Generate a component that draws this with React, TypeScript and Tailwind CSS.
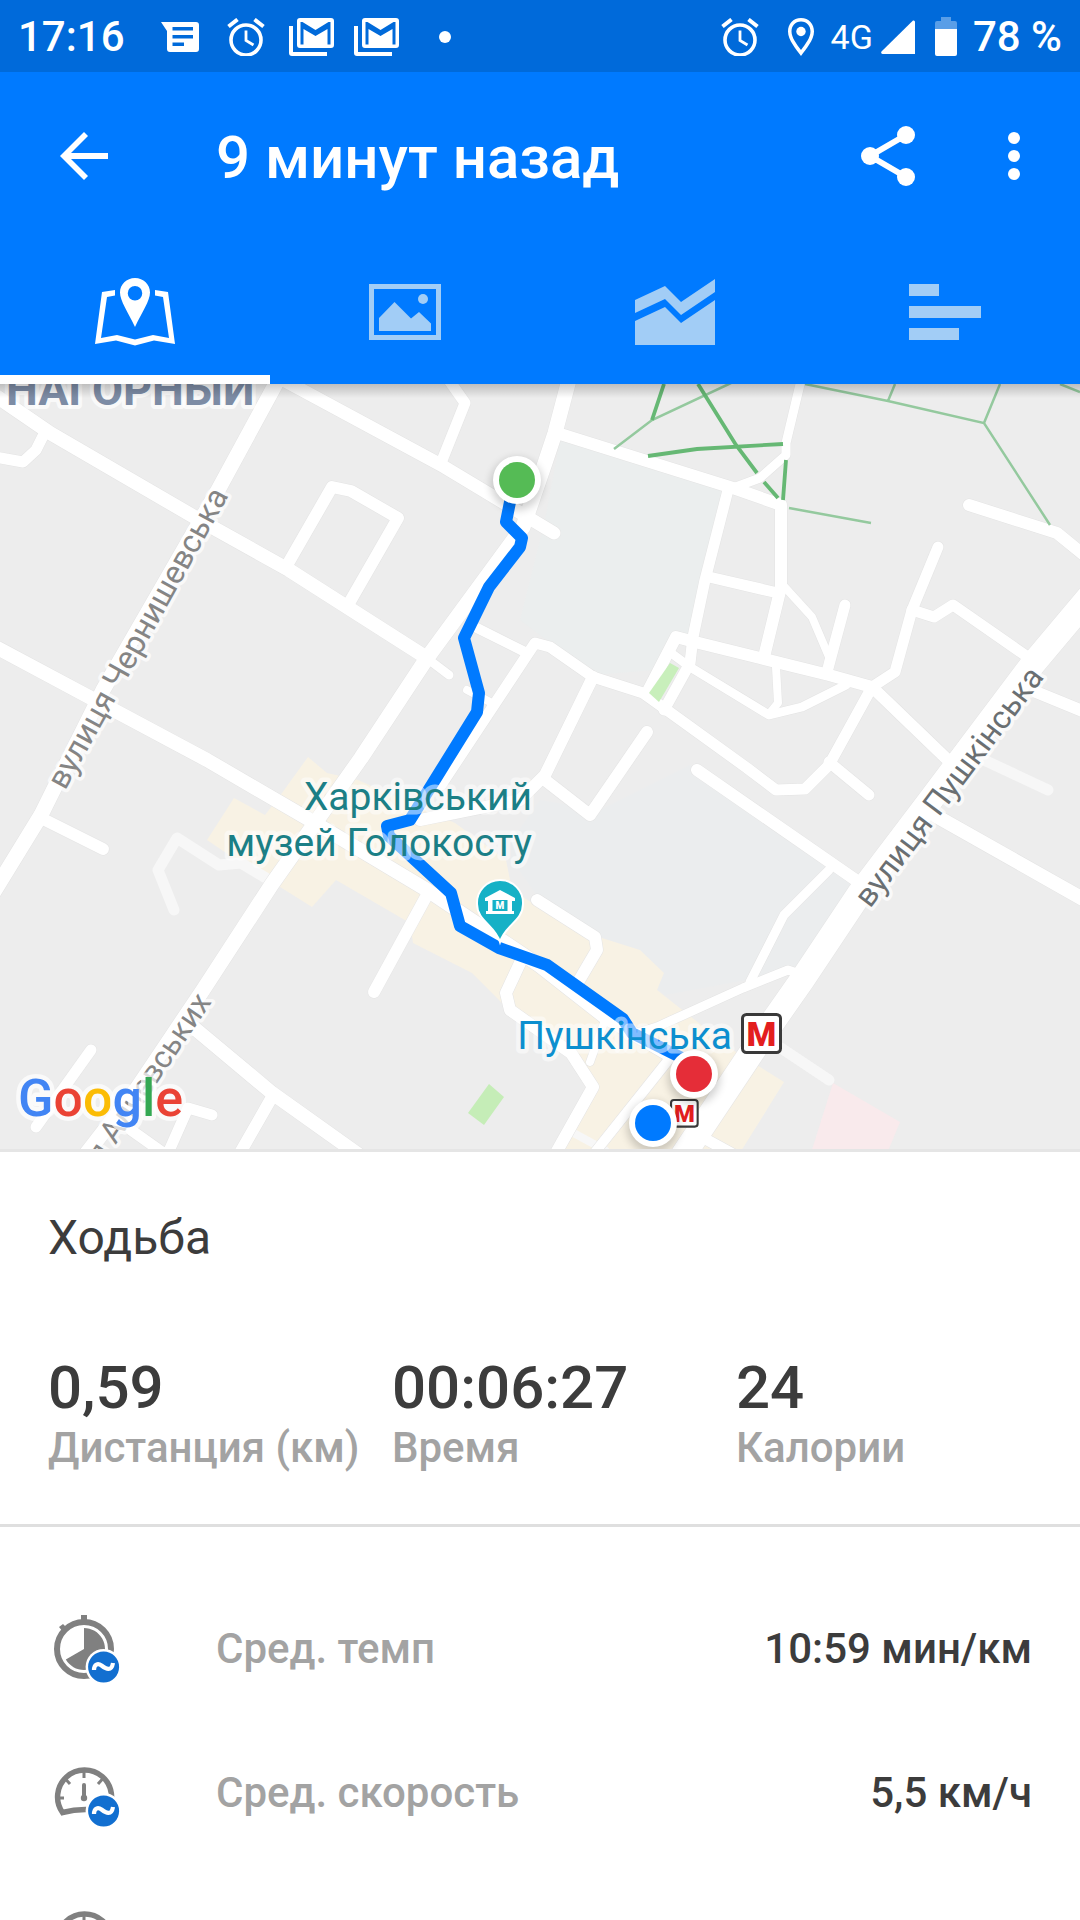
import type { ReactNode } from 'react'

type Road = { d: string; w: number }

const roads: Road[] = [
  { d: 'M-10 392L50 433L203 522L289 570L427 658', w: 14 },
  { d: 'M420 653L449 675', w: 9 },
  { d: 'M45 432L36 450L23 462L-5 457', w: 11 },
  { d: 'M280 376L217 492L103 690L41 815L-8 895', w: 15 },
  { d: 'M276 376L441 465L554 533', w: 13 },
  { d: 'M446 376L465 403L441 463', w: 11 },
  { d: 'M286 567L332 487L351 491L398 518L348 605', w: 12 },
  { d: 'M-10 644L91 698L207 760L310 820L427 890L540 966L605 1017L670 1055', w: 14 },
  { d: 'M570 376L555 433L545 463L523 527L427 658L361 758L272 884L203 990L138 1087L80 1162', w: 15 },
  { d: 'M477 628L527 653', w: 10 },
  { d: 'M467 690L492 703', w: 8 },
  { d: 'M441 785L535 643L550 647L593 677L643 693L664 708L747 768L776 790L805 789L829 765L872 687', w: 11 },
  { d: 'M593 677L545 775L520 800L420 820', w: 12 },
  { d: 'M545 780L590 815L647 732', w: 12 },
  { d: 'M829 762L869 795', w: 11 },
  { d: 'M872 687L951 763', w: 12 },
  { d: 'M872 687L895 672L912 610L938 547', w: 11 },
  { d: 'M912 610L934 617L953 605L1032 660', w: 11 },
  { d: 'M1090 596L1032 665L929 802L860 893L802 980L760 1040L680 1160', w: 25 },
  { d: 'M1036 692L1090 714', w: 12 },
  { d: 'M936 816L1090 903', w: 14 },
  { d: 'M697 770L860 883', w: 12 },
  { d: 'M829 870L784 915L750 982', w: 9 },
  { d: 'M806 976L788 970L743 988L657 1027L628 1036', w: 9 },
  { d: 'M537 900L595 937L597 950L577 984', w: 12 },
  { d: 'M557 433L733 488L781 505L781 587L764 657', w: 12 },
  { d: 'M733 488L760 478L786 455L786 443L802 376', w: 9 },
  { d: 'M728 490L705 580L693 637L690 663L664 710', w: 11 },
  { d: 'M709 577L778 593', w: 11 },
  { d: 'M647 693L676 637L695 642L760 658L829 675L872 687', w: 12 },
  { d: 'M671 653L690 667L769 715L802 707L846 685', w: 9 },
  { d: 'M776 667L778 703L769 714', w: 8 },
  { d: 'M781 583L812 617L829 657L828 672', w: 8 },
  { d: 'M845 605L827 672', w: 11 },
  { d: 'M969 505L1057 533L1090 560', w: 12 },
  { d: 'M41 818L103 849', w: 12 },
  { d: 'M427 895L374 992', w: 12 },
  { d: 'M520 963L506 993L510 1010L571 1053L593 1087L552 1160', w: 12 },
  { d: 'M605 1020L590 1062', w: 8 },
  { d: 'M193 1027L272 1093L366 1160', w: 14 },
  { d: 'M272 1097L236 1160', w: 12 },
  { d: 'M91 1050L36 1127', w: 11 },
  { d: 'M131 1130L176 1162M165 1160L188 1108L212 1115', w: 11 },
  { d: 'M670 1058L592 1156', w: 10 },
  { d: 'M700 1136L740 1158', w: 11 },
  { d: 'M508 1156L530 1164', w: 8 },
]

const minorRoads: Road[] = [
  { d: 'M174 910L158 870L177 838L219 865L241 863L266 878', w: 11 },
  { d: 'M984 760L1048 790', w: 11 },
  { d: 'M781 1048L829 1080', w: 11 },
  { d: 'M568 1130L605 1150', w: 8 },
]

const route =
  'M514 490L510 502L506 522L522 538L520 547L489 587L464 638L479 693L477 712L441 770L410 820L387 826L389 836L451 893L460 926L499 948L547 965L623 1019L632 1033L690 1062'

function Icon({ w, h, box, children }: { w: string; h: string; box: string; children: ReactNode }) {
  return (
    <svg className={`${w} ${h} shrink-0`} viewBox={box} fill="currentColor" aria-hidden="true">
      {children}
    </svg>
  )
}

function AlarmIcon() {
  return (
    <Icon w="w-[38px]" h="h-[38px]" box="0 0 38 38">
      <g fill="none" stroke="currentColor">
        <circle cx="19" cy="22" r="15" strokeWidth="3.6" />
        <path d="M19 12.5V22.5L26.5 27" strokeWidth="2.8" />
        <path d="M1.5 8.5L10.5 1.5M36.5 8.5L27.5 1.5" strokeWidth="4" />
      </g>
    </Icon>
  )
}

function GmailIcon() {
  return (
    <Icon w="w-[45px]" h="h-[38px]" box="0 0 45 38">
      <path d="M0 8H4V34H38V38H3Q0 38 0 35Z" />
      <path
        fillRule="evenodd"
        d="M11 0H42Q45 0 45 3V27Q45 30 42 30H11Q8 30 8 27V3Q8 0 11 0ZM11.5 4V26.5H14.5V11L26.5 18L38.5 11V26.5H41.5V4H39.5L26.5 12L13.5 4Z"
      />
    </Icon>
  )
}

function StatusBar() {
  return (
    <div className="flex h-[72px] items-center justify-between bg-[#006ada] px-[18px] pt-0.5 text-[42px] font-medium leading-none text-white">
      <div className="flex items-center">
        <span>17:16</span>
        <div className="ml-9 flex items-center gap-7">
          <Icon w="w-[38px]" h="h-[30px]" box="0 0 38 30">
            <path
              fillRule="evenodd"
              d="M0 0H35Q38 0 38 3V27Q38 30 35 30H9Q6 30 6 27V9ZM11.5 5V8.5H32V5ZM11.5 13V16.5H32V13ZM11.5 20.5V24H23V20.5Z"
            />
          </Icon>
          <AlarmIcon />
        </div>
        <div className="ml-6 flex items-center gap-5">
          <GmailIcon />
          <GmailIcon />
        </div>
        <span className="ml-10 size-3 rounded-full bg-white" />
      </div>
      <div className="flex items-center">
        <AlarmIcon />
        <div className="ml-7 mr-4 flex">
          <Icon w="w-[28px]" h="h-[38px]" box="0 0 28 38">
            <path
              fillRule="evenodd"
              d="M14 0C6 0 1 6 1 13.5C1 22 9 31 14 38C19 31 27 22 27 13.5C27 6 22 0 14 0ZM14 3.5C20 3.5 23.5 8 23.5 13.5C23.5 19.5 18.5 26 14 32C9.5 26 4.5 19.5 4.5 13.5C4.5 8 8 3.5 14 3.5Z"
            />
            <circle cx="14" cy="13.5" r="4.7" />
          </Icon>
        </div>
        <span className="text-[34px] font-normal">4G</span>
        <div className="ml-2 flex">
          <Icon w="w-[34px]" h="h-[34px]" box="0 0 34 34">
            <path d="M32 .5Q34 0 34 2V34H1.5Q-.5 33.5 .5 31.5Z" />
          </Icon>
        </div>
        <div className="ml-5 mr-4 flex">
          <Icon w="w-[22px]" h="h-[40px]" box="0 0 22 40">
            <path opacity=".35" d="M6 0H16V4H20Q22 4 22 6V12H0V6Q0 4 2 4H6Z" />
            <path d="M0 12H22V37Q22 39 20 39H2Q0 39 0 37Z" />
          </Icon>
        </div>
        <span>78 %</span>
      </div>
    </div>
  )
}

function Toolbar() {
  return (
    <div className="flex h-[168px] items-center pl-[60px] pr-[60px]">
      <button type="button" aria-label="Назад">
        <Icon w="w-12" h="h-12" box="0 0 48 48">
          <path d="M24 0L28 4L11 21H48V27H11L28 44L24 48L0 24Z" />
        </Icon>
      </button>
      <h1 className="ml-[108px] flex-1 pt-1 text-[60px] font-medium leading-none">9 минут назад</h1>
      <button type="button" aria-label="Поделиться">
        <Icon w="w-[54px]" h="h-[60px]" box="0 0 54 60">
          <path d="M45 9L9 30L45 51" fill="none" stroke="currentColor" strokeWidth="6" />
          <circle cx="45" cy="9" r="9" />
          <circle cx="9" cy="30" r="9" />
          <circle cx="45" cy="51" r="9" />
        </Icon>
      </button>
      <button type="button" aria-label="Ещё" className="ml-[93px]">
        <Icon w="w-3" h="h-12" box="0 0 12 48">
          <circle cx="6" cy="6" r="6" />
          <circle cx="6" cy="24" r="6" />
          <circle cx="6" cy="42" r="6" />
        </Icon>
      </button>
    </div>
  )
}

function Tabs() {
  return (
    <div role="tablist" className="grid h-36 grid-cols-4 text-[#a2cdf6]">
      <button
        type="button"
        role="tab"
        aria-selected="true"
        aria-label="Карта"
        className="flex items-center justify-center border-b-[9px] border-white pt-2 text-white"
      >
        <Icon w="w-20" h="h-[68px]" box="0 0 80 68">
          <path
            fillRule="evenodd"
            d="M40 0C31.5 0 25 6.5 25 14.5C25 23 33 34 40 49C47 34 55 23 55 14.5C55 6.5 48.5 0 40 0ZM40 8A7.2 7.2 0 1 1 40 22.5A7.2 7.2 0 1 1 40 8Z"
          />
          <path d="M20 12L7 14L0 66L21 62.5L40 67.5L59 62.5L80 66L73 14L60 12V17.5L68 19L74 60L58 57L40 61.5L22 57L6 60L12 19L20 17.5Z" />
        </Icon>
      </button>
      <button type="button" role="tab" aria-selected="false" aria-label="Фото" className="flex items-center justify-center">
        <Icon w="w-[72px]" h="h-14" box="0 0 72 56">
          <path fillRule="evenodd" d="M0 0H72V56H0ZM5 5V51H67V5Z" />
          <path d="M10 47V34L25.500 18L42 34.500L50 28L62 39.500V47Z" />
          <circle cx="54" cy="15" r="5" />
        </Icon>
      </button>
      <button type="button" role="tab" aria-selected="false" aria-label="Графики" className="flex items-center justify-center">
        <Icon w="w-20" h="h-[66px]" box="0 0 80 66">
          <path d="M0 21L30 7L46 23L80 0V13L46 36L30 20L0 34Z" />
          <path d="M0 42L30 28L46 44L80 21V66H0Z" />
        </Icon>
      </button>
      <button type="button" role="tab" aria-selected="false" aria-label="Отрезки" className="flex items-center justify-center">
        <Icon w="w-[72px]" h="h-14" box="0 0 72 56">
          <path d="M0 0H30V12H0ZM0 22H72V34H0ZM0 44H50V56H0Z" />
        </Icon>
      </button>
    </div>
  )
}

function Marker({ x, y, color }: { x: number; y: number; color: string }) {
  return (
    <g>
      <circle cx={x} cy={y + 4} r="26" fill="#000" opacity=".18" filter="url(#soft)" />
      <circle cx={x} cy={y} r="24" fill="#fff" />
      <circle cx={x} cy={y} r="18" fill={color} />
    </g>
  )
}

function MetroSign({ x, y, s }: { x: number; y: number; s: number }) {
  return (
    <g transform={`translate(${x} ${y}) scale(${s})`}>
      <rect x="1.5" y="1.5" width="38" height="38" rx="4" fill="#fff" stroke="#3a3a3a" strokeWidth="3" />
      <text x="20.5" y="33" textAnchor="middle" fontSize="34" fontWeight="900" fill="#e31e1e">
        М
      </text>
    </g>
  )
}

function RouteMap() {
  return (
    <svg
      className="block h-auto w-full shrink-0 bg-[#ededed]"
      viewBox="0 384 1080 768"
      fontFamily="Roboto, sans-serif"
      role="img"
      aria-label="Маршрут на карте"
    >
      <defs>
        <filter id="soft" x="-50%" y="-50%" width="200%" height="200%">
          <feGaussianBlur stdDeviation="4" />
        </filter>
        <linearGradient id="shade" x1="0" y1="0" x2="0" y2="1">
          <stop offset="0" stopColor="#000" stopOpacity=".2" />
          <stop offset="1" stopColor="#000" stopOpacity="0" />
        </linearGradient>
      </defs>

      {/* Zonas */}
      <path d="M560 440L725 490L690 635L655 670L593 675L520 620L545 520Z" fill="#ebeeee" />
      <path d="M690 765L860 885L800 970L665 995L600 938L540 900L505 850L540 800L600 810Z" fill="#ebedee" />
      <path
        d="M308 757L327 773L358 780L455 823L506 860L512 890L540 908L602 938L640 950L664 973L657 990L733 1050L784 1082L738 1156H552L598 1087L575 1057L517 1020L499 1000L472 973L413 943L410 923L336 880L312 907L269 880L241 863L207 840L234 798L265 815L282 793Z"
        fill="#f8f2e4"
      />
      <path d="M833 1083L900 1122L886 1156H810Z" fill="#f9eaec" />
      <path d="M489 1084L504 1097L484 1125L468 1113Z" fill="#c5edb7" />

      <g fill="none" stroke="#f7f7f7" strokeLinecap="round" strokeLinejoin="round">
        {minorRoads.map((r) => (
          <path key={r.d} d={r.d} strokeWidth={r.w} />
        ))}
      </g>
      <g fill="none" stroke="#e4e4e4" strokeLinecap="round" strokeLinejoin="round">
        {roads.map((r) => (
          <path key={r.d} d={r.d} strokeWidth={r.w + 1} />
        ))}
      </g>
      <g fill="none" stroke="#fff" strokeLinecap="round" strokeLinejoin="round">
        {roads.map((r) => (
          <path key={r.d} d={r.d} strokeWidth={r.w} />
        ))}
      </g>
      <path d="M670 663L679 668L659 702L649 693Z" fill="#c8efbb" />

      {/* Senderos del parque */}
      <g fill="none" stroke="#94c99e" strokeWidth="2.5">
        <path d="M614 449L652 420L731 383M805 384L888 401L984 423L1050 525M895 384L888 401M1000 384L984 423M1060 384L1080 392M789 508L871 523" />
      </g>
      <g fill="none" stroke="#66b874" strokeWidth="3.8">
        <path d="M664 384L652 420M698 384L736 445L757 473M764 482L778 498M648 456L697 449L783 444M786 460L783 500" />
      </g>

      <path d={route} fill="none" stroke="#007aff" strokeWidth="12" strokeLinejoin="round" />

      <g stroke="#fff" strokeOpacity=".7" strokeLinejoin="round" paintOrder="stroke">
        <text x="6" y="405" fontSize="45" fontWeight="700" fill="#7d8ca5" strokeWidth="8">
          НАГОРНЫЙ
        </text>
        <g fontSize="32" fill="#858585" strokeWidth="7">
          <text transform="translate(65 791) rotate(-61)">вулиця Чернишевська</text>
          <text transform="translate(212 1002) rotate(-56)" textAnchor="end" fontSize="31">
            вулиця Алчевських
          </text>
          <text transform="translate(870 909) rotate(-53)" fill="#6a6f72">
            вулиця Пушкінська
          </text>
        </g>
        <g fontSize="39" strokeOpacity=".5" strokeWidth="9">
          <text x="532" y="810" textAnchor="end" fill="#1b7f86">
            Харківський
          </text>
          <text x="532" y="856" textAnchor="end" fill="#1b7f86">
            музей Голокосту
          </text>
          <text x="732" y="1049" textAnchor="end" fill="#0d8fcf">
            Пушкінська
          </text>
        </g>
        <text x="18" y="1116" fontSize="52" fontWeight="500" strokeWidth="9">
          <tspan fill="#4285f4">G</tspan>
          <tspan fill="#ea4335">o</tspan>
          <tspan fill="#fbbc05">o</tspan>
          <tspan fill="#4285f4">g</tspan>
          <tspan fill="#34a853">l</tspan>
          <tspan fill="#ea4335">e</tspan>
        </text>
      </g>

      {/* Museo */}
      <path
        d="M500 880A23 23 0 0 0 477 904C477 921 495 925 500 942C505 925 523 921 523 904A23 23 0 0 0 500 880Z"
        fill="#16b1c6"
        stroke="#fff"
        strokeWidth="2"
      />
      <path d="M500 890L515 898V901H485V898ZM488 901H512V911H514V914H486V911H488Z" fill="#fff" />
      <rect x="492.5" y="900" width="15" height="11" fill="#16b1c6" />
      <text x="500" y="909" textAnchor="middle" fontSize="10" fontWeight="900" fill="#fff">
        M
      </text>

      <MetroSign x={741} y={1013} s={1} />
      <MetroSign x={670} y={1099} s={0.7} />
      <Marker x={517} y={480} color="#55bb55" />
      <Marker x={694} y={1074} color="#e52d38" />
      <Marker x={653} y={1123} color="#007aff" />
      <rect x="0" y="384" width="1080" height="14" fill="url(#shade)" />
      <rect x="0" y="1149" width="1080" height="3" fill="#e5e5e5" />
    </svg>
  )
}

const stats = [
  { value: '0,59', label: 'Дистанция (км)' },
  { value: '00:06:27', label: 'Время' },
  { value: '24', label: 'Калории' },
]

function Summary() {
  return (
    <section className="border-b-[3px] border-[#dfdfdf] pb-[52px] pl-12 pt-[58px]">
      <h2 className="text-[48px] leading-[56px]">Ходьба</h2>
      <dl className="mt-[86px] grid grid-cols-3 font-medium">
        {stats.map((s) => (
          <div key={s.label} className="flex flex-col-reverse">
            <dt className="whitespace-nowrap text-[42px] leading-[48px] text-[#a3a3a3]">{s.label}</dt>
            <dd className="text-[60px] leading-[72px]">{s.value}</dd>
          </div>
        ))}
      </dl>
    </section>
  )
}

function AverageBadge() {
  return (
    <g>
      <circle cx="55.6" cy="54" r="18" fill="#fff" />
      <circle cx="55.6" cy="54" r="15.5" fill="#126fd0" />
      <path
        d="M46 57C46 51 50 50 53.5 52.5C58 56 63.5 59 65 50"
        fill="none"
        stroke="#fff"
        strokeWidth="4.2"
      />
    </g>
  )
}

function PaceIcon() {
  return (
    <Icon w="w-[72px]" h="h-[72px]" box="0 0 72 72">
      <circle cx="36" cy="36" r="27" fill="none" stroke="currentColor" strokeWidth="6" />
      <path d="M33 2H39V9H33ZM11 14L15 11L19 15L15 19Z" />
      <path d="M36 36V15A21 21 0 1 1 17.8 46.5Z" />
      <AverageBadge />
    </Icon>
  )
}

function SpeedIcon() {
  return (
    <Icon w="w-[72px]" h="h-[72px]" box="0 0 72 72">
      <path
        d="M14.5 55.5A27 27 0 1 1 59 55Q36 50 14.5 55.5Z"
        fill="none"
        stroke="currentColor"
        strokeWidth="5.5"
      />
      <path
        d="M36 14V21M9 41H16M54 41H62M17.5 22L22 27M54.5 22L50 27"
        stroke="currentColor"
        strokeWidth="3"
      />
      <path d="M36 28V41" stroke="currentColor" strokeWidth="4" strokeLinecap="round" />
      <circle cx="36" cy="41" r="3.2" />
      <AverageBadge />
    </Icon>
  )
}

const details = [
  { icon: <PaceIcon />, label: 'Сред. темп', value: '10:59 мин/км' },
  { icon: <SpeedIcon />, label: 'Сред. скорость', value: '5,5 км/ч' },
  { icon: <SpeedIcon />, label: '', value: '' },
]

export default function App() {
  return (
    <div className="flex h-screen flex-col overflow-hidden bg-white font-[Roboto,sans-serif] text-[#3c3c3c]">
      <header className="shrink-0 bg-[#007aff] text-white">
        <StatusBar />
        <Toolbar />
        <Tabs />
      </header>
      <main className="flex min-h-0 flex-1 flex-col overflow-hidden">
        <RouteMap />
        <Summary />
        <ul className="pt-[50px]">
          {details.map((d, i) => (
            <li key={i} className="flex h-36 items-center px-12 text-[42px] font-medium leading-none text-[#808080]">
              {d.icon}
              <span className="ml-24 flex-1 text-[#a3a3a3]">{d.label}</span>
              <span className="text-[#3c3c3c]">{d.value}</span>
            </li>
          ))}
        </ul>
      </main>
    </div>
  )
}
